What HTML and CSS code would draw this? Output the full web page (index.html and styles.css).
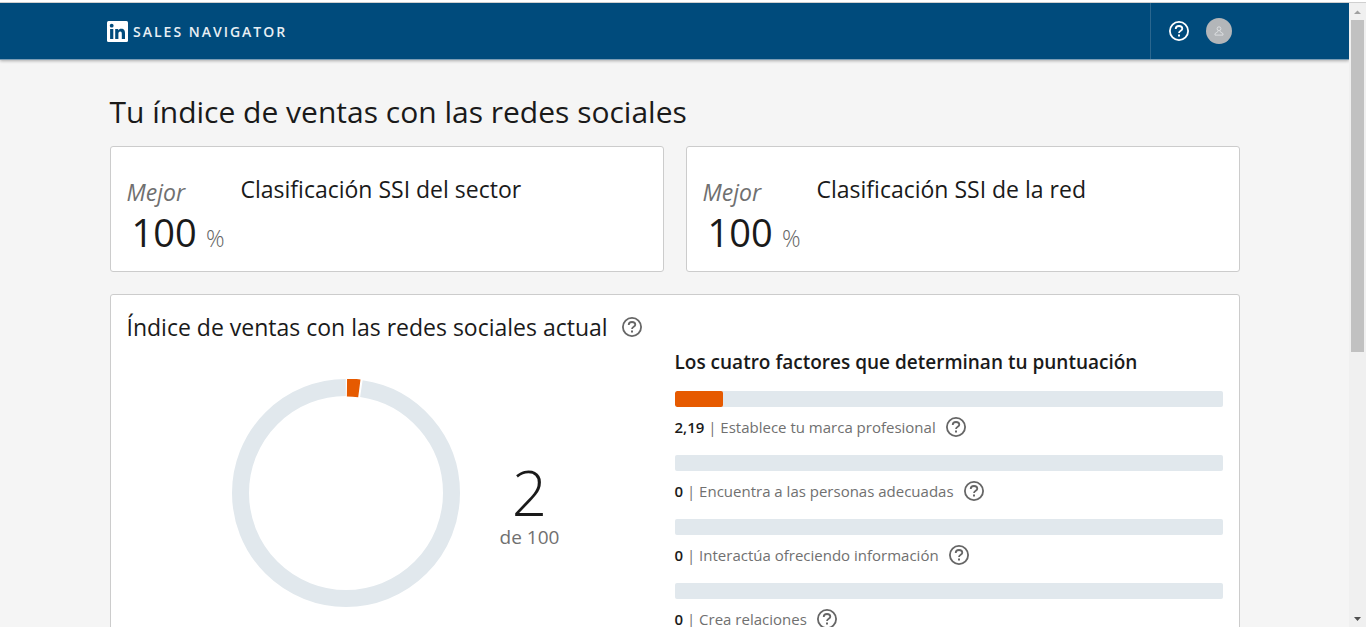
FILE: index.html
```html
<!DOCTYPE html>
<html lang="es">
<head>
<meta charset="utf-8">
<title>Sales Navigator</title>
<link rel="stylesheet" href="styles.css">
</head>
<body>
<svg class="defs" aria-hidden="true">
  <symbol id="help" viewBox="0 0 20 20">
    <circle cx="10" cy="10" r="9.1" fill="none" stroke="currentColor" stroke-width="1.8"/>
    <path d="M6.700 8C6.700 6 8 5 10 5s3.300 1 3.300 2.700c0 2.100-3.300 2-3.300 4.300" fill="none" stroke="currentColor" stroke-width="1.800"/>
    <rect x="9" y="13.500" width="2" height="2" fill="currentColor"/>
  </symbol>
</svg>
<div class="shell">
  <div class="page">
    <header class="topbar">
      <div class="topbar-inner">
        <a class="brand" href="#">
          <svg class="brand-logo" viewBox="0 0 21 21" aria-hidden="true">
            <rect width="21" height="21" rx="1.5" fill="#fff"/>
            <circle cx="4.7" cy="4.7" r="1.9" fill="#004b7c"/>
            <rect x="3.1" y="8" width="3.2" height="10" fill="#004b7c"/>
            <path d="M8.2 8h3v1.4c.6-1 1.700-1.600 3-1.600 3 0 3.800 1.900 3.800 4.600V18h-3.200v-5c0-1.300-.200-2.500-1.600-2.500s-1.800 1.100-1.800 2.400V18H8.200z" fill="#004b7c"/>
          </svg>
          <span>SALES NAVIGATOR</span>
        </a>
        <nav class="tools">
          <button class="help help-light" aria-label="Ayuda"><svg><use href="#help"/></svg></button>
          <button class="avatar" aria-label="Perfil">
            <svg viewBox="0 0 10 10"><circle cx="5" cy="2.700" r="1.900"/><path d="M3.800 4.800v1L1 7.600v1.500h8V7.600L6.200 5.800v-1"/></svg>
          </button>
        </nav>
      </div>
    </header>
    <main class="content">
      <h1>Tu índice de ventas con las redes sociales</h1>
      <div class="cards">
        <section class="card rank">
          <div class="rank-value"><em>Mejor</em><p><strong>100</strong><span>%</span></p></div>
          <h2>Clasificación SSI del sector</h2>
        </section>
        <section class="card rank">
          <div class="rank-value"><em>Mejor</em><p><strong>100</strong><span>%</span></p></div>
          <h2>Clasificación SSI de la red</h2>
        </section>
      </div>
      <section class="card index">
        <div class="current">
          <div class="current-title">
            <h2>Índice de ventas con las redes sociales actual</h2>
            <button class="help" aria-label="Ayuda"><svg><use href="#help"/></svg></button>
          </div>
          <div class="score">
            <svg class="donut" viewBox="0 0 228 228" aria-hidden="true">
              <g fill="none" stroke-width="17" transform="rotate(-90 114 114)">
                <circle cx="114" cy="114" r="105.5" stroke="#e1e8ed" stroke-dasharray="646.500 17" stroke-dashoffset="-15.500"/>
                <circle cx="114" cy="114" r="105.5" stroke="#e65a00" stroke-width="18" stroke-dasharray="12.500 660" stroke-dashoffset="-1"/>
              </g>
            </svg>
            <div class="score-text"><strong>2</strong><span>de 100</span></div>
          </div>
        </div>
        <div class="factors">
          <h3>Los cuatro factores que determinan tu puntuación</h3>
          <ul>
            <li><div class="bar"><div class="fill" style="width: 8.76%"></div></div>
              <div class="factor"><p><b>2,19</b> | Establece tu marca profesional</p><button class="help" aria-label="Ayuda"><svg><use href="#help"/></svg></button></div></li>
            <li><div class="bar"></div>
              <div class="factor"><p><b>0</b> | Encuentra a las personas adecuadas</p><button class="help" aria-label="Ayuda"><svg><use href="#help"/></svg></button></div></li>
            <li><div class="bar"></div>
              <div class="factor"><p><b>0</b> | Interactúa ofreciendo información</p><button class="help" aria-label="Ayuda"><svg><use href="#help"/></svg></button></div></li>
            <li><div class="bar"></div>
              <div class="factor"><p><b>0</b> | Crea relaciones</p><button class="help" aria-label="Ayuda"><svg><use href="#help"/></svg></button></div></li>
          </ul>
        </div>
      </section>
    </main>
  </div>
  <div class="scrollbar" aria-hidden="true">
    <svg viewBox="0 0 17 17"><path d="M5 11h7L8.500 7.500z" fill="#a0a0a0"/></svg>
    <div class="track"><div class="thumb"></div></div>
    <svg viewBox="0 0 17 17"><path d="M5 7h7l-3.500 4z" fill="#505050"/></svg>
  </div>
</div>
</body>
</html>
```
FILE: styles.css
```css
* { box-sizing: border-box; }
body {
  margin: 0;
  background: #fff;
  color: #1a1a1a;
  font-family: "Open Sans", "Noto Sans", sans-serif;
}
h1, h2, h3, p, ul { margin: 0; padding: 0; }
button { padding: 0; border: 0; background: none; cursor: pointer; }
.defs { display: none; }
.shell {
  display: grid;
  grid-template-columns: minmax(0, 1fr) 17px;
  height: 100vh;
  padding-top: 2px;
  overflow: hidden;
}
.page {
  min-height: 0;
  overflow: hidden;
  border-top: 1px solid #cfcfcf;
  background: #f5f5f5;
}
.topbar {
  background: #004b7c;
  border-bottom: 1px solid #7b9db5;
  box-shadow: 0 1px 3px rgba(0, 0, 0, 0.3);
}
.topbar-inner {
  display: flex;
  justify-content: space-between;
  max-width: 1135px;
  height: 56px;
  margin: 0 auto;
}
.brand {
  display: flex;
  align-items: center;
  gap: 5px;
  color: #e8eff4;
  font-size: 14px;
  font-weight: 600;
  letter-spacing: 2px;
  text-decoration: none;
}
.brand-logo { width: 21px; height: 21px; }
.tools {
  display: flex;
  align-items: center;
  gap: 17px;
  padding: 0 10px 0 18px;
  border-left: 1px solid #2b678f;
}
.help { display: block; flex: none; width: 20px; height: 20px; color: #666; }
.help svg { display: block; width: 20px; height: 20px; }
.help-light { color: #fff; }
.avatar {
  display: grid;
  place-items: center;
  width: 26px;
  height: 26px;
  border-radius: 50%;
  background: #b3b6b9;
}
.avatar svg { width: 10px; height: 10px; fill: none; stroke: #dcdee0; }
.content { max-width: 1130px; margin: 0 auto; padding-top: 31px; }
h1 { font-size: 30px; line-height: 42px; font-weight: 400; }
h2 { font-size: 23px; line-height: 32px; font-weight: 400; }
.card { border: 1px solid #ccc; border-radius: 3px; background: #fff; }
.cards {
  display: grid;
  grid-template-columns: 1fr 1fr;
  gap: 22px;
  margin: 13px 0 22px;
}
.rank { display: flex; gap: 16px; padding: 26px 16px 18px; }
.rank-value { width: 98px; }
.rank-value em {
  display: block;
  color: #707070;
  font-size: 23px;
  font-weight: 400;
  line-height: 38px;
}
.rank-value p {
  display: flex;
  align-items: baseline;
  justify-content: space-between;
  padding-left: 5px;
  line-height: 42px;
}
.rank-value strong { font-size: 38px; font-weight: 400; }
.rank-value span { color: #666; font-size: 23px; line-height: 24px; font-weight: 300; }
.index {
  display: grid;
  grid-template-columns: 1fr 1fr;
  padding: 16px;
}
.current-title { display: flex; align-items: center; gap: 14px; }
.score {
  display: flex;
  align-items: center;
  justify-content: center;
  gap: 40px;
  padding: 36px 10px 16px 0;
}
.donut { width: 228px; height: 228px; }
.score-text {
  display: flex;
  flex-direction: column;
  align-items: center;
  padding-top: 26px;
}
.score-text strong { font-size: 62px; line-height: 62px; font-weight: 300; }
.score-text span { color: #707070; font-size: 19px; line-height: 28px; font-weight: 400; }
.factors { padding-top: 37px; }
.factors h3 { font-size: 19px; line-height: 28px; font-weight: 600; }
.factors ul { display: grid; gap: 16px; margin-top: 15px; list-style: none; }
.bar { height: 16px; border-radius: 2px; background: #e1e8ed; overflow: hidden; }
.fill { height: 100%; border-radius: 2px; background: #e65a00; }
.factor {
  display: flex;
  align-items: center;
  gap: 10px;
  height: 32px;
  padding-top: 8px;
  color: #707070;
  font-size: 15px;
  line-height: 24px;
  font-weight: 400;
}
.factor b { color: #1a1a1a; font-weight: 600; }
.scrollbar {
  display: flex;
  flex-direction: column;
  border-top: 1px solid #cfcfcf;
  background: #f0f0f0;
}
.scrollbar svg { flex: none; width: 17px; height: 17px; }
.track { flex: 1; padding: 0 2px 0 2px; }
.thumb { height: 56.3%; background: #c1c1c1; }
```
